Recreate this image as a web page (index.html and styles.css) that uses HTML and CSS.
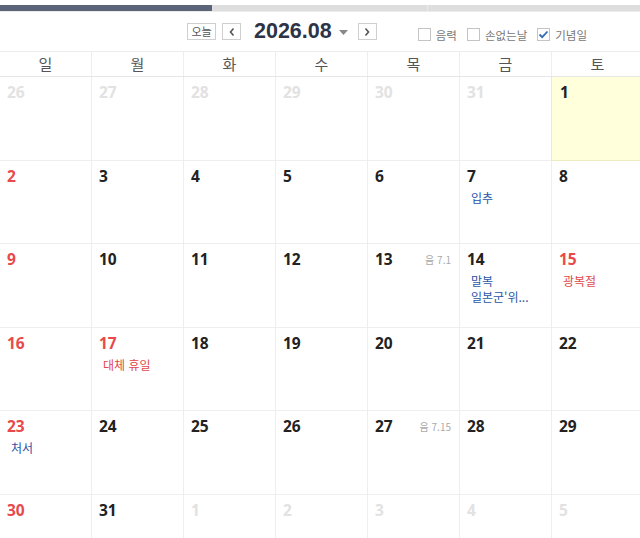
FILE: index.html
```html
<!DOCTYPE html>
<html lang="ko">
<head>
<meta charset="utf-8">
<link rel="stylesheet" href="styles.css">
</head>
<body>
<div class="page">
  <div class="topbar"><div class="seg-dark"></div><div class="seg-light"></div><div class="seg-light2"></div></div>
  <div class="toolbar">
    <button class="btn today">오늘</button>
    <button class="btn arrow"><svg width="8" height="10" viewBox="0 0 8 10"><path d="M5.5 1.5 L2.5 5 L5.5 8.5" fill="none" stroke="#555" stroke-width="1.6"/></svg></button>
    <div class="title">2026.08</div>
    <svg class="caret" width="9" height="5" viewBox="0 0 9 5"><path d="M0 0 H9 L4.5 5 Z" fill="#888"/></svg>
    <button class="btn arrow next"><svg width="8" height="10" viewBox="0 0 8 10"><path d="M2.5 1.5 L5.5 5 L2.5 8.5" fill="none" stroke="#555" stroke-width="1.6"/></svg></button>
    <div class="checks">
      <label class="chk"><span class="box"></span>음력</label>
      <label class="chk"><span class="box"></span>손없는날</label>
      <label class="chk"><span class="box checked"><svg width="11" height="9" viewBox="0 0 11 9"><path d="M1.5 4.5 L4.2 7.2 L9.5 1.5" fill="none" stroke="#2f6db5" stroke-width="1.8"/></svg></span>기념일</label>
    </div>
  </div>
  <div class="cal">
    <div class="head">
      <div class="hd">일</div><div class="hd">월</div><div class="hd">화</div><div class="hd">수</div><div class="hd">목</div><div class="hd">금</div><div class="hd">토</div>
    </div>
    <div class="body">
      <div class="cell other"><span class="num">26</span></div>
      <div class="cell other"><span class="num">27</span></div>
      <div class="cell other"><span class="num">28</span></div>
      <div class="cell other"><span class="num">29</span></div>
      <div class="cell other"><span class="num">30</span></div>
      <div class="cell other"><span class="num">31</span></div>
      <div class="cell today-cell"><span class="num">1</span></div>

      <div class="cell sun"><span class="num">2</span></div>
      <div class="cell"><span class="num">3</span></div>
      <div class="cell"><span class="num">4</span></div>
      <div class="cell"><span class="num">5</span></div>
      <div class="cell"><span class="num">6</span></div>
      <div class="cell"><span class="num">7</span><div class="ev blue">입추</div></div>
      <div class="cell"><span class="num">8</span></div>

      <div class="cell sun"><span class="num">9</span></div>
      <div class="cell"><span class="num">10</span></div>
      <div class="cell"><span class="num">11</span></div>
      <div class="cell"><span class="num">12</span></div>
      <div class="cell"><span class="num">13</span><span class="lunar">음 7.1</span></div>
      <div class="cell"><span class="num">14</span><div class="ev blue">말복</div><div class="ev blue">일본군'위...</div></div>
      <div class="cell holiday"><span class="num">15</span><div class="ev red">광복절</div></div>

      <div class="cell sun"><span class="num">16</span></div>
      <div class="cell holiday"><span class="num">17</span><div class="ev red">대체 휴일</div></div>
      <div class="cell"><span class="num">18</span></div>
      <div class="cell"><span class="num">19</span></div>
      <div class="cell"><span class="num">20</span></div>
      <div class="cell"><span class="num">21</span></div>
      <div class="cell"><span class="num">22</span></div>

      <div class="cell sun"><span class="num">23</span><div class="ev blue">처서</div></div>
      <div class="cell"><span class="num">24</span></div>
      <div class="cell"><span class="num">25</span></div>
      <div class="cell"><span class="num">26</span></div>
      <div class="cell"><span class="num">27</span><span class="lunar">음 7.15</span></div>
      <div class="cell"><span class="num">28</span></div>
      <div class="cell"><span class="num">29</span></div>

      <div class="cell sun"><span class="num">30</span></div>
      <div class="cell"><span class="num">31</span></div>
      <div class="cell other"><span class="num">1</span></div>
      <div class="cell other"><span class="num">2</span></div>
      <div class="cell other"><span class="num">3</span></div>
      <div class="cell other"><span class="num">4</span></div>
      <div class="cell other"><span class="num">5</span></div>
    </div>
  </div>
</div>
</body>
</html>
```

FILE: styles.css
```css
html, body {
  margin: 0;
  padding: 0;
  background: #fff;
}
body {
  font-family: "Noto Sans CJK KR", "Noto Sans", sans-serif;
  width: 640px;
  height: 538px;
  overflow: hidden;
}
.page {
  width: 640px;
  height: 538px;
  overflow: hidden;
}
.topbar {
  display: flex;
  height: 6px;
  margin-top: 5px;
  border-bottom: 1px solid #ececec;
}
.seg-dark { width: 212px; background: #5b6479; }
.seg-light { width: 215px; background: #dedede; border-right: 1px solid #e9e9e9; }
.seg-light2 { flex: 1; background: #dedede; }

.toolbar {
  display: flex;
  align-items: center;
  height: 39px;
  padding-left: 187px;
  box-sizing: border-box;
}
.btn {
  display: flex;
  align-items: center;
  justify-content: center;
  height: 17px;
  padding: 0;
  margin: 0;
  background: #fff;
  border: 1px solid #cfcfcf;
  box-sizing: border-box;
  font-family: "Noto Sans CJK KR", sans-serif;
  font-size: 11px;
  color: #555;
  line-height: 1;
}
.today { width: 29px; }
.arrow { width: 19px; margin-left: 6px; }
.title {
  margin-left: 13px;
  font-family: "Liberation Sans", Arial, sans-serif;
  font-weight: bold;
  font-size: 21.5px;
  color: #2e3346;
  letter-spacing: 0;
}
.caret { margin-left: 7px; margin-top: 1px; }
.next { margin-left: 10px; }
.checks {
  display: flex;
  align-items: center;
  margin-left: 41px;
  margin-top: 6px;
}
.chk {
  display: flex;
  align-items: center;
  font-size: 11.5px;
  color: #777;
  margin-right: 10px;
}
.box {
  display: flex;
  align-items: center;
  justify-content: center;
  width: 13px;
  height: 13px;
  border: 1px solid #c4c4c4;
  box-sizing: border-box;
  margin-right: 5px;
  background: #fff;
}

.cal {
  width: 644px;
  border-top: 1px solid #ececec;
}
.head {
  display: grid;
  grid-template-columns: repeat(7, 92px);
  height: 24px;
  border-bottom: 1px solid #e6e6e6;
}
.hd {
  border-right: 1px solid #eeeeee;
  text-align: center;
  font-size: 15px;
  line-height: 23px;
  color: #555;
}
.body {
  display: grid;
  grid-template-columns: repeat(7, 92px);
  grid-auto-rows: 83.6px;
}
.cell {
  position: relative;
  border-right: 1px solid #eeeeee;
  border-bottom: 1px solid #eeeeee;
  padding: 4px 0 0 7px;
  box-sizing: border-box;
}
.num {
  display: block;
  font-family: "Open Sans", "Liberation Sans", sans-serif;
  font-weight: 700;
  font-size: 15.5px;
  line-height: 22px;
  color: #222;
}
.other .num { color: #e2e2e2; }
.sun .num, .holiday .num { color: #e8494a; }
.today-cell { background: #ffffdb; border-right-color: #ececc0; border-bottom-color: #ececc0; border-left: 1px solid #ececc0; margin-left: -1px; padding-left: 8px; }
.lunar {
  position: absolute;
  top: 8px;
  right: 8px;
  font-size: 10px;
  color: #aaa;
}
.ev {
  font-size: 12px;
  line-height: 16px;
  padding-left: 4px;
}
.ev:first-of-type { margin-top: 3px; }
.blue { color: #2b56a6; }
.red { color: #e0494a; }
```
